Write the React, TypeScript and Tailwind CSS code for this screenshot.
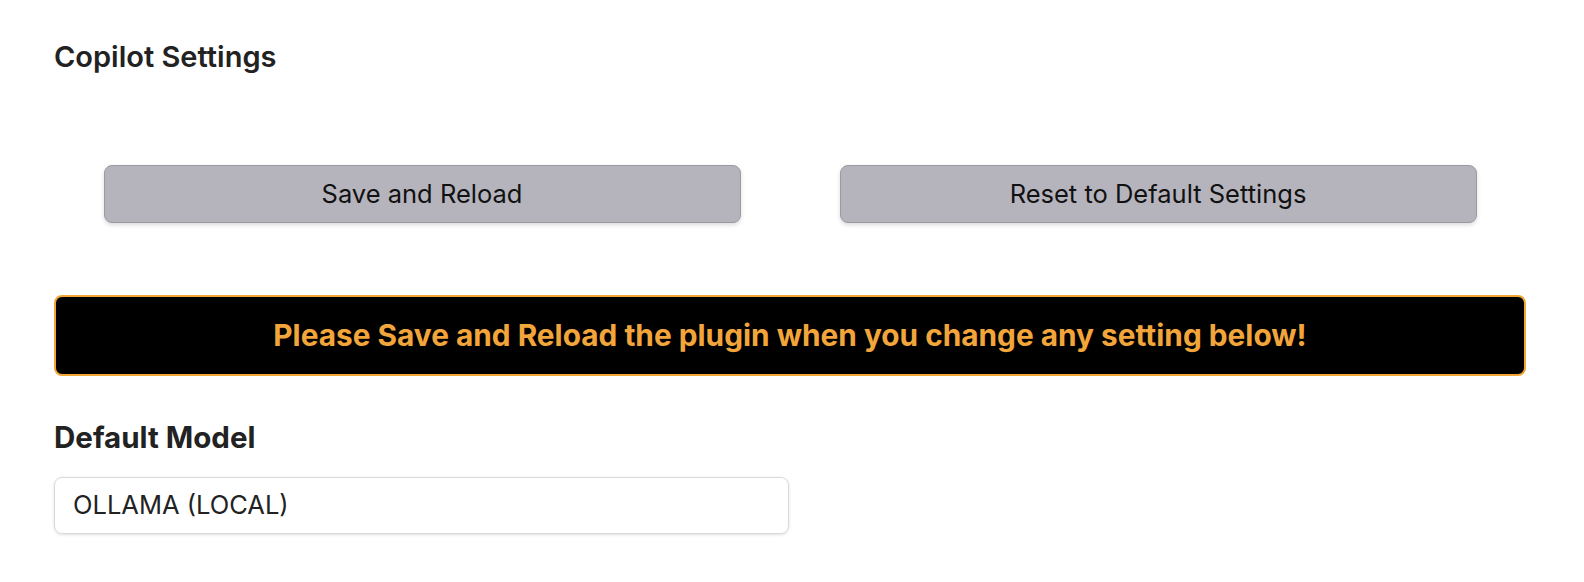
export default function App() {
  return (
    <div
      className="w-full h-[582px] bg-white text-[#222222] pl-[54px] pr-[58px] pt-[39px]"
      style={{ fontFamily: 'Inter, "Noto Sans", sans-serif' }}
    >
      {/* Title */}
      <h1 className="text-[29px] leading-[36px] font-semibold">Copilot Settings</h1>

      {/* Actions */}
      <div className="grid grid-cols-2 mt-[90px]">
        <div className="flex justify-center">
          <button className="w-[637px] h-[58px] rounded-[8px] bg-[#b5b4bd] border border-[#9b9aa4] shadow-[0_2px_4px_rgba(0,0,0,0.15)] text-[25.5px] text-[#111111]">
            Save and Reload
          </button>
        </div>
        <div className="flex justify-center">
          <button className="w-[637px] h-[58px] rounded-[8px] bg-[#b5b4bd] border border-[#9b9aa4] shadow-[0_2px_4px_rgba(0,0,0,0.15)] text-[25.5px] text-[#111111]">
            Reset to Default Settings
          </button>
        </div>
      </div>

      {/* Warning banner */}
      <div className="mt-[72px] h-[81px] rounded-[8px] bg-black border-2 border-[#f2a635] flex items-center justify-center">
        <span className="text-[29.8px] font-bold text-[#f2a53a]">
          Please Save and Reload the plugin when you change any setting below!
        </span>
      </div>

      {/* Default model */}
      <h2 className="mt-[43px] text-[29.5px] leading-[36px] font-bold">Default Model</h2>
      <div className="mt-[22px] w-[735px] h-[57px] rounded-[8px] border border-[#d9d9d9] shadow-[0_1px_3px_rgba(0,0,0,0.12)] flex items-center pl-[18px] text-[25.5px] text-[#222222]">
        OLLAMA (LOCAL)
      </div>
    </div>
  );
}
